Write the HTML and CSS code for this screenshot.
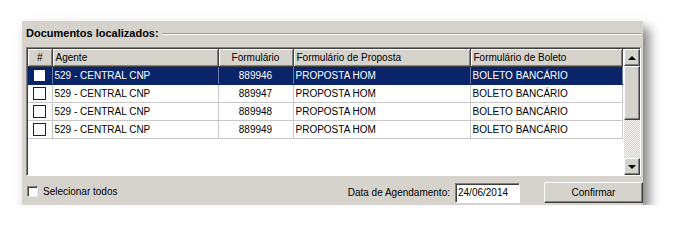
FILE: index.html
```html
<!DOCTYPE html>
<html lang="pt-BR">
<head>
    <meta charset="UTF-8">
    <title>Documentos localizados</title>
    <link rel="stylesheet" href="styles.css">
</head>
<body>
    <div class="window">
        <div class="group-title">
            <span>Documentos localizados:</span>
            <div class="etched"></div>
        </div>

        <div class="grid">
            <div class="grid-body">
                <table>
                    <colgroup>
                        <col style="width: 24px">
                        <col style="width: 166px">
                        <col style="width: 75px">
                        <col style="width: 177px">
                        <col style="width: 152px">
                    </colgroup>
                    <thead>
                        <tr>
                            <th class="center">#</th>
                            <th>Agente</th>
                            <th class="center">Formulário</th>
                            <th>Formulário de Proposta</th>
                            <th>Formulário de Boleto</th>
                        </tr>
                    </thead>
                    <tbody>
                        <tr class="selected">
                            <td class="center"><span class="check"></span></td>
                            <td>529 - CENTRAL CNP</td>
                            <td class="center">889946</td>
                            <td>PROPOSTA HOM</td>
                            <td>BOLETO BANCÁRIO</td>
                        </tr>
                        <tr>
                            <td class="center"><span class="check"></span></td>
                            <td>529 - CENTRAL CNP</td>
                            <td class="center">889947</td>
                            <td>PROPOSTA HOM</td>
                            <td>BOLETO BANCÁRIO</td>
                        </tr>
                        <tr>
                            <td class="center"><span class="check"></span></td>
                            <td>529 - CENTRAL CNP</td>
                            <td class="center">889948</td>
                            <td>PROPOSTA HOM</td>
                            <td>BOLETO BANCÁRIO</td>
                        </tr>
                        <tr>
                            <td class="center"><span class="check"></span></td>
                            <td>529 - CENTRAL CNP</td>
                            <td class="center">889949</td>
                            <td>PROPOSTA HOM</td>
                            <td>BOLETO BANCÁRIO</td>
                        </tr>
                    </tbody>
                </table>
            </div>
            <div class="scrollbar">
                <div class="sb-btn"><span class="arrow up"></span></div>
                <div class="sb-thumb"></div>
                <div class="sb-track"></div>
                <div class="sb-btn"><span class="arrow down"></span></div>
            </div>
        </div>

        <div class="footer">
            <label class="select-all"><span class="check3d"></span>Selecionar todos</label>
            <div class="schedule">
                <span>Data de Agendamento:</span>
                <div class="date-input">24/06/2014</div>
                <button class="btn">Confirmar</button>
            </div>
        </div>
    </div>
</body>
</html>
```

FILE: styles.css
```css
body {
    margin: 0;
    background-color: #fff;
    font-family: "Liberation Sans", Arial, sans-serif;
    font-size: 10px;
    color: #000;
}
.window {
    width: 617px;
    height: 184px;
    margin: 21px 0 0 22px;
    padding: 0 0 0 4px;
    background-color: #d6d3cc;
    box-shadow: 6px 7px 11px rgba(0, 0, 0, 0.5);
    display: flex;
    flex-direction: column;
}
.group-title {
    height: 26px;
    display: flex;
    align-items: center;
    gap: 4px;
    padding-bottom: 3px;
    padding-right: 2px;
    box-sizing: border-box;
}
.group-title span {
    font-weight: bold;
    font-size: 11px;
}
.etched {
    flex: 1;
    height: 0;
    border-top: 1px solid #9a9894;
    border-bottom: 1px solid #fff;
    margin-top: 3px;
}
.grid {
    width: 615px;
    height: 129px;
    flex-shrink: 0;
    box-sizing: border-box;
    border: 1px solid;
    border-color: #808080 #fff #fff #808080;
    display: flex;
}
.grid-body {
    flex: 1;
    background-color: #fff;
    border-top: 1px solid #404040;
    border-left: 1px solid #404040;
}
table {
    border-collapse: collapse;
    table-layout: fixed;
    width: 594px;
}
th {
    height: 17px;
    padding: 0 3px;
    box-sizing: border-box;
    font-weight: normal;
    text-align: left;
    background-color: #d6d3cc;
    border-right: 1px solid #404040;
    border-bottom: 1px solid #404040;
    box-shadow: inset 1px 1px 0 #fff, inset -1px -1px 0 #808080;
}
td {
    height: 18px;
    padding: 0 2px;
    box-sizing: border-box;
    border-right: 1px solid #c8c8c8;
    border-bottom: 1px solid #c8c8c8;
    white-space: nowrap;
    overflow: hidden;
}
.center {
    text-align: center;
}
.selected td {
    background-color: #0a246a;
    color: #fff;
    border-right-color: #6a7aa8;
    border-bottom-color: #0a246a;
}
.check {
    display: inline-block;
    width: 11px;
    height: 11px;
    border: 1px solid #202020;
    background-color: #fff;
    vertical-align: middle;
}
.scrollbar {
    width: 16px;
    border-top: 1px solid #404040;
}
.sb-btn,
.sb-thumb {
    background-color: #d6d3cc;
    border: 1px solid;
    border-color: #fff #404040 #404040 #fff;
    box-shadow: inset -1px -1px 0 #808080;
    box-sizing: border-box;
}
.sb-btn {
    height: 17px;
    display: flex;
    align-items: center;
    justify-content: center;
}
.sb-thumb {
    height: 54px;
}
.sb-track {
    height: 38px;
    background: repeating-conic-gradient(#d6d3cc 0 25%, #f4f3f0 0 50%) 0 0 / 2px 2px;
}
.arrow {
    width: 0;
    height: 0;
    border-left: 4px solid transparent;
    border-right: 4px solid transparent;
}
.arrow.up {
    border-bottom: 4px solid #000;
}
.arrow.down {
    border-top: 4px solid #000;
}
.footer {
    display: flex;
    justify-content: space-between;
    align-items: center;
    margin-top: 6px;
    height: 21px;
}
.select-all {
    display: flex;
    align-items: center;
    gap: 5px;
    margin-left: 1px;
    margin-top: -2px;
}
.check3d {
    width: 9px;
    height: 9px;
    background-color: #fff;
    border: 1px solid;
    border-color: #808080 #e8e8e8 #e8e8e8 #808080;
    box-shadow: inset 1px 1px 0 #404040;
}
.schedule {
    display: flex;
    align-items: center;
}
.date-input {
    width: 65px;
    height: 20px;
    margin-left: 5px;
    padding: 2px 2px 0;
    box-sizing: border-box;
    background-color: #fff;
    border: 1px solid;
    border-color: #808080 #fff #fff #808080;
    box-shadow: inset 1px 1px 0 #404040;
    line-height: 14px;
}
.btn {
    width: 99px;
    height: 21px;
    margin-left: 24px;
    font-family: inherit;
    font-size: 10px;
    background-color: #d6d3cc;
    border: 1px solid;
    border-color: #fff #404040 #404040 #fff;
    box-shadow: inset -1px -1px 0 #808080;
    padding: 0;
}
```
